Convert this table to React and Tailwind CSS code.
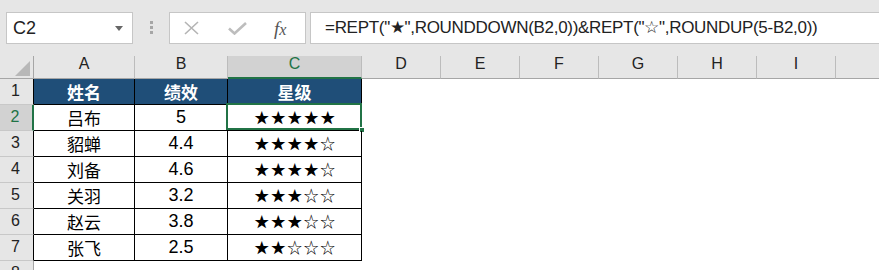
import React from "react";

const cols = [
  { key: "A", w: "w-[101px]" },
  { key: "B", w: "w-[93px]" },
  { key: "C", w: "w-[134px]" },
  { key: "D", w: "w-[79px]" },
  { key: "E", w: "w-[79px]" },
  { key: "F", w: "w-[79px]" },
  { key: "G", w: "w-[79px]" },
  { key: "H", w: "w-[79px]" },
  { key: "I", w: "w-[79px]" },
];

const people = [
  ["吕布", "5", "★★★★★"],
  ["貂蝉", "4.4", "★★★★☆"],
  ["刘备", "4.6", "★★★★☆"],
  ["关羽", "3.2", "★★★☆☆"],
  ["赵云", "3.8", "★★★☆☆"],
  ["张飞", "2.5", "★★☆☆☆"],
];

const cjk = "font-['Noto_Sans_CJK_SC',sans-serif]";
const latin = "font-['Liberation_Sans',Arial,sans-serif]";

function FormulaBar() {
  return (
    <div className="flex h-[56px] items-start pt-[12px] pl-[6px]">
      {/* name box */}
      <div className="flex h-[32px] w-[127px] items-center justify-between border border-[#c6c6c6] bg-white pl-[6px] pr-[9px]">
        <span className={`${latin} text-[18px] text-[#222]`}>C2</span>
        <svg width="8" height="5" viewBox="0 0 8 5">
          <path d="M0 0h8L4 5z" fill="#666" />
        </svg>
      </div>
      <div className="ml-[17px] mt-[9px] flex flex-col gap-[2px]">
        <span className="block h-[3px] w-[3px] bg-[#a6a6a6]" />
        <span className="block h-[3px] w-[3px] bg-[#a6a6a6]" />
        <span className="block h-[3px] w-[3px] bg-[#a6a6a6]" />
      </div>
      {/* cancel / enter / insert function */}
      <div className="ml-[16px] flex h-[32px] w-[137px] items-center border border-[#c6c6c6] bg-white">
        <svg className="ml-[14px]" width="15" height="14" viewBox="0 0 15 14">
          <path d="M1 1l13 12M14 1L1 13" stroke="#b4b4b4" strokeWidth="1.6" />
        </svg>
        <svg className="ml-[29px] mt-[1px]" width="19" height="13" viewBox="0 0 19 13">
          <path d="M1 6.5l5.5 5L18 1" stroke="#bdbdbd" strokeWidth="2.6" fill="none" />
        </svg>
        <span className="ml-[27px] font-['Liberation_Serif',serif] text-[19px] italic text-[#555] leading-none">
          f<span className="text-[16px]">x</span>
        </span>
      </div>
      <div className="ml-[4px] flex h-[32px] flex-1 items-center border border-r-0 border-[#c6c6c6] bg-white pl-[14px]">
        <span className={`${latin} text-[17px] tracking-[-0.3px] text-[#222] whitespace-nowrap`}>
          =REPT("★",ROUNDDOWN(B2,0))&amp;REPT("☆",ROUNDUP(5-B2,0))
        </span>
      </div>
    </div>
  );
}

function ColumnHeaders() {
  return (
    <div className="flex h-[23px]">
      <div className="flex h-full w-[34px] items-end justify-end border-r border-b border-[#a6a6a6] pr-[3px] pb-[2px]">
        <svg width="15" height="15" viewBox="0 0 15 15">
          <path d="M15 0V15H0z" fill="#b8b8b8" />
        </svg>
      </div>
      {cols.map((c) =>
        c.key === "C" ? (
          <div
            key={c.key}
            className={`${c.w} ${latin} flex h-full items-end justify-center border-r border-b-2 border-r-[#bcbcbc] border-b-[#217346] bg-[#d2d2d2] pb-[1px] text-[16px] text-[#217346]`}
          >
            {c.key}
          </div>
        ) : (
          <div
            key={c.key}
            className={`${c.w} ${latin} flex h-full items-end justify-center border-r border-b border-r-[#bcbcbc] border-b-[#a6a6a6] pb-[2px] text-[16px] text-[#222]`}
          >
            {c.key}
          </div>
        )
      )}
      <div className="h-full flex-1 border-b border-[#a6a6a6]" />
    </div>
  );
}

function RowHead({ n, selected, inTable }) {
  return (
    <div
      className={`${latin} flex h-[26px] w-[34px] shrink-0 items-end justify-center border-b border-b-[#c8c8c8] pb-[1px] pr-[2px] text-[16px] ${
        selected
          ? "border-r-2 border-r-[#217346] bg-[#d2d2d2] text-[#217346]"
          : `border-r bg-[#e6e6e6] text-[#222] ${inTable ? "border-r-black" : "border-r-[#a6a6a6]"}`
      }`}
    >
      {n}
    </div>
  );
}

const cell = "flex h-[26px] items-center justify-center border-r border-b border-black";

export default function App() {
  return (
    <div className="h-[270px] w-[879px] overflow-hidden bg-white">
      <div className="bg-[#e6e6e6]">
        <FormulaBar />
        <ColumnHeaders />
      </div>

      {/* header row */}
      <div className="flex">
        <RowHead n={1} inTable />
        <div className={`${cell} ${cjk} w-[101px] bg-[#1f4e78] text-[17px] font-bold text-white`}>姓名</div>
        <div className={`${cell} ${cjk} w-[93px] bg-[#1f4e78] text-[17px] font-bold text-white`}>绩效</div>
        <div className={`${cell} ${cjk} w-[134px] bg-[#1f4e78] text-[17px] font-bold text-white`}>星级</div>
      </div>

      {people.map(([name, score, stars], i) => (
        <div key={name} className="flex">
          <RowHead n={i + 2} selected={i === 0} inTable />
          <div className={`${cell} ${cjk} w-[101px] text-[17px] text-black`}>{name}</div>
          <div className={`${cell} ${latin} w-[93px] text-[18px] text-black`}>{score}</div>
          <div className={`${cell} ${cjk} relative w-[134px] pl-[2px] text-[15px] tracking-[1.5px] text-black`}>
            {stars}
            {i === 0 && (
              <>
                <div className="absolute -left-[2px] -top-[2px] right-[-1px] bottom-0 border-2 border-[#217346]" />
                <div className="absolute -bottom-[3px] -right-[4px] h-[6px] w-[6px] border border-white bg-[#217346]" />
              </>
            )}
          </div>
        </div>
      ))}

      <div className="flex">
        <RowHead n={8} />
      </div>
    </div>
  );
}
